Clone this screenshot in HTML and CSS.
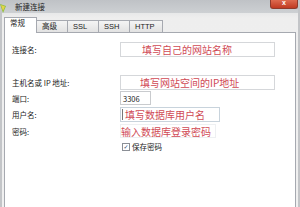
FILE: index.html
```html
<!DOCTYPE html>
<html lang="zh">
<head>
    <meta charset="UTF-8">
    <title>新建连接</title>
    <link rel="stylesheet" href="styles.css">
</head>
<body>
    <div class="window">
        <div class="titlebar">
            <svg class="app-icon" width="8" height="10" viewBox="0 0 8 10">
                <path d="M0 1 L6 3 L3 10 Z" fill="#8fbf3a"/>
                <path d="M1 2 L5 3.5 L3 8 Z" fill="#e6d34a"/>
            </svg>
            <span class="title">新建连接</span>
            <div class="close">x</div>
        </div>

        <div class="tabs">
            <div class="tab active">常规</div>
            <div class="tab">高级</div>
            <div class="tab">SSL</div>
            <div class="tab">SSH</div>
            <div class="tab last">HTTP</div>
        </div>

        <div class="panel">
            <div class="row row-name">
                <span class="label">连接名:</span>
                <div class="field wide hint-a">填写自己的网站名称</div>
            </div>
            <div class="row row-host">
                <span class="label">主机名或 IP 地址:</span>
                <div class="field wide hint-b">填写网站空间的IP地址</div>
            </div>
            <div class="row row-port">
                <span class="label">端口:</span>
                <div class="field port">3306</div>
            </div>
            <div class="row row-user">
                <span class="label">用户名:</span>
                <div class="field user"><span class="caret"></span>填写数据库用户名</div>
            </div>
            <div class="row row-pass">
                <span class="label">密码:</span>
                <div class="field pass">输入数据库登录密码</div>
            </div>
            <div class="row row-save">
                <span class="label"></span>
                <span class="check">✓</span>
                <span class="save-text">保存密码</span>
            </div>
        </div>
    </div>
</body>
</html>
```

FILE: styles.css
```css
body {
    margin: 0;
    padding: 0;
    font-family: "Noto Sans CJK SC", "Liberation Sans", sans-serif;
    background-color: #f0f0f0;
    overflow: hidden;
}
.window {
    width: 300px;
    height: 207px;
    display: flex;
    flex-direction: column;
    background: linear-gradient(#d7d9dc, #eeeeee 18px, #f0f0f0);
    border-left: 2px solid #c3c5c8;
    border-right: 2px solid #c3c5c8;
    box-sizing: border-box;
}
.titlebar {
    height: 13px;
    display: flex;
    align-items: center;
    background: linear-gradient(#bfc2c6, #cdd0d3);
}
.app-icon {
    margin-left: -2px;
    margin-top: 2px;
}
.title {
    margin-left: 7px;
    font-size: 7.5px;
    color: #222;
}
.close {
    margin-left: auto;
    margin-right: 0;
    align-self: flex-start;
    width: 26px;
    height: 8px;
    background: linear-gradient(#dd6a4f, #c03a22);
    border: 1px solid #8f3b2c;
    border-top: none;
    border-radius: 0 0 3px 3px;
    color: white;
    font-size: 7px;
    font-weight: bold;
    line-height: 6px;
    text-align: center;
    font-family: "Liberation Sans", sans-serif;
}
.tabs {
    height: 19px;
    display: flex;
    align-items: flex-end;
    padding-left: 2px;
}
.tab {
    height: 11px;
    padding: 0 5px;
    border: 1px solid #a6a9b0;
    border-bottom: none;
    border-right: none;
    background: linear-gradient(#f4f4f4, #e2e2e2);
    font-size: 7.5px;
    line-height: 11px;
    color: #222;
    font-family: "Liberation Sans", "Noto Sans CJK SC", sans-serif;
    width: 20px;
}
.tab.last {
    border-right: 1px solid #a6a9b0;
    width: 22px;
}
.tab.active {
    height: 15px;
    width: 21px;
    margin-bottom: -1px;
    background: white;
    border-right: 1px solid #a6a9b0;
    position: relative;
    z-index: 1;
}
.tab.active + .tab {
    border-left: none;
}
.panel {
    flex: 1;
    margin: 0 2px;
    background: white;
    border: 1px solid #a6a9b0;
    border-bottom: none;
    padding: 9px 0 0 7px;
}
.row {
    display: flex;
    align-items: center;
}
.label {
    width: 108px;
    font-size: 7.5px;
    color: #222;
    flex-shrink: 0;
}
.field {
    box-sizing: border-box;
    border: 1px solid #d5d7da;
    color: #d04a55;
    font-size: 10px;
    line-height: 13px;
    height: 15px;
    display: flex;
    align-items: center;
    white-space: nowrap;
}
.wide {
    width: 155px;
}
.hint-a {
    padding-left: 21px;
}
.hint-b {
    padding-left: 19px;
}
.row-name {
    height: 15px;
}
.row-host {
    height: 15px;
    margin-top: 18px;
}
.row-port {
    height: 14px;
    margin-top: 1px;
}
.port {
    width: 31px;
    height: 14px;
    color: #222;
    font-size: 7.5px;
    padding-left: 2px;
    border-color: #c9cbce;
}
.row-user {
    height: 15px;
    margin-top: 2px;
}
.user {
    width: 100px;
    border-color: #c8d3dc;
    padding-left: 1px;
}
.caret {
    width: 1px;
    height: 11px;
    background: #777;
    margin-right: 2px;
}
.row-pass {
    height: 14px;
    margin-top: 2px;
}
.pass {
    width: 96px;
    height: 14px;
    border-color: #eef0f2;
    padding-left: 0;
}
.row-save {
    height: 9px;
    margin-top: 4px;
}
.check {
    width: 6px;
    height: 6px;
    margin-left: 2px;
    border: 1px solid #8b8f96;
    font-size: 6px;
    line-height: 6px;
    text-align: center;
    color: #2a3f6a;
    font-family: "DejaVu Sans", sans-serif;
}
.save-text {
    margin-left: 2px;
    font-size: 7.5px;
    color: #222;
}
```
